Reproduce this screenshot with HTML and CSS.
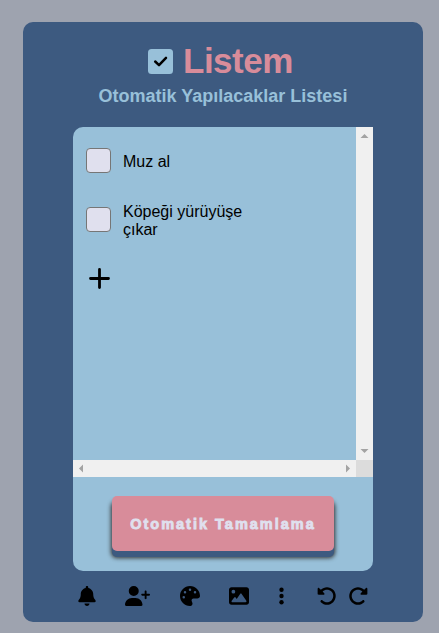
FILE: index.html
```html
<!DOCTYPE html>
<html lang="tr">
<head>
<meta charset="utf-8">
<title>Listem</title>
<link rel="stylesheet" href="styles.css">
</head>
<body>
<main class="card">
  <header class="header">
    <h1 class="title">
      <svg class="logo" viewBox="0 0 25 25"><rect width="25" height="25" rx="3.5" fill="#98c0d9"/><path d="M7.2 12.500 11 16.100 18 8.900" fill="none" stroke="#000" stroke-width="2.5" stroke-linecap="round" stroke-linejoin="round"/></svg>
      <span>Listem</span>
    </h1>
    <h2 class="subtitle">Otomatik Yapılacaklar Listesi</h2>
  </header>
  <section class="panel">
    <div class="scroller">
      <ul class="list">
        <li class="item"><span class="box"></span><span class="label">Muz al</span></li>
        <li class="item"><span class="box"></span><span class="label">Köpeği yürüyüşe çıkar</span></li>
        <li class="item"><svg class="plus" viewBox="0 0 21 21"><path d="M10.5 1.5v18M1.5 10.5h18" stroke="#000" stroke-width="2.8" stroke-linecap="round"/></svg></li>
      </ul>
      <div class="bar vertical">
        <svg viewBox="0 0 17 17"><path d="M4.500 11h8L8.500 7z"/></svg>
        <svg viewBox="0 0 17 17"><path d="M4.500 6h8L8.500 10z"/></svg>
      </div>
      <div class="bar horizontal">
        <svg viewBox="0 0 17 17"><path d="M10 4.500v8L6 8.500z"/></svg>
        <svg viewBox="0 0 17 17"><path d="M7 4.500v8l4-4z"/></svg>
      </div>
      <div class="corner"></div>
    </div>
    <div class="actions"><button class="complete">Otomatik Tamamlama</button></div>
  </section>
  <nav class="tools">
    <svg class="bell" viewBox="0 0 448 512"><path d="M224 0c-17.7 0-32 14.3-32 32V51.2C119 66 64 130.6 64 208v18.8c0 47-17.3 92.4-48.5 127.6l-7.400 8.300c-8.400 9.400-10.400 22.900-5.300 34.400S19.400 416 32 416H416c12.600 0 24-7.400 29.200-18.900s3.100-25-5.300-34.400l-7.400-8.300C401.300 319.200 384 273.900 384 226.800V208c0-77.400-55-142-128-156.800V32c0-17.700-14.300-32-32-32zm45.300 493.300c12-12 18.700-28.300 18.700-45.300H224 160c0 17 6.700 33.300 18.700 45.300s28.300 18.700 45.300 18.700s33.300-6.700 45.300-18.700z"/></svg>
    <svg class="person" viewBox="0 0 640 512"><path d="M96 128a128 128 0 1 1 256 0A128 128 0 1 1 96 128zM0 482.3C0 383.800 79.800 304 178.300 304h91.400C368.200 304 448 383.800 448 482.300c0 16.400-13.300 29.700-29.700 29.700H29.700C13.300 512 0 498.700 0 482.300zM504 312V248H440c-13.300 0-24-10.700-24-24s10.700-24 24-24h64V136c0-13.300 10.700-24 24-24s24 10.700 24 24v64h64c13.300 0 24 10.700 24 24s-10.700 24-24 24H552v64c0 13.300-10.700 24-24 24s-24-10.700-24-24z"/></svg>
    <svg class="palette" viewBox="0 0 512 512"><path d="M512 256c0 .9 0 1.8 0 2.700c-.4 36.500-33.600 61.300-70.100 61.300H344c-26.500 0-48 21.500-48 48c0 3.400 .4 6.700 1 9.900c2.100 10.200 6.500 20 10.800 29.900c6.100 13.800 12.100 27.500 12.100 42c0 31.800-21.600 60.700-53.400 62c-3.500 .1-7 .2-10.600 .2C114.600 512 0 397.400 0 256S114.600 0 256 0S512 114.600 512 256zM128 288a32 32 0 1 0 -64 0 32 32 0 1 0 64 0zm0-96a32 32 0 1 0 0-64 32 32 0 1 0 0 64zM288 96a32 32 0 1 0 -64 0 32 32 0 1 0 64 0zm96 96a32 32 0 1 0 0-64 32 32 0 1 0 0 64z"/></svg>
    <svg class="image" viewBox="0 0 512 512"><path d="M0 96C0 60.700 28.700 32 64 32H448c35.300 0 64 28.700 64 64V416c0 35.300-28.700 64-64 64H64c-35.300 0-64-28.700-64-64V96zM323.800 202.500c-4.500-6.600-11.900-10.500-19.800-10.500s-15.400 3.900-19.800 10.500l-87 127.600L170.700 297c-4.600-5.700-11.500-9-18.700-9s-14.200 3.300-18.700 9l-64 80c-5.800 7.200-6.900 17.100-2.900 25.400s12.400 13.600 21.600 13.600h96 32H424c8.900 0 17.100-4.900 21.200-12.800s3.600-17.400-1.400-24.700l-120-176zM112 192a48 48 0 1 0 0-96 48 48 0 1 0 0 96z"/></svg>
    <svg class="more" viewBox="0 0 128 512"><circle cx="64" cy="96" r="56"/><circle cx="64" cy="256" r="56"/><circle cx="64" cy="416" r="56"/></svg>
    <svg class="undo" viewBox="0 0 512 512"><path d="M48.500 224H40c-13.300 0-24-10.700-24-24V72c0-9.700 5.800-18.500 14.800-22.200s19.300-1.700 26.200 5.200L98.600 96.600c87.600-86.500 228.700-86.200 315.800 1c87.500 87.500 87.500 229.300 0 316.800s-229.300 87.500-316.800 0c-12.500-12.500-12.500-32.800 0-45.300s32.800-12.500 45.300 0c62.500 62.500 163.800 62.500 226.300 0s62.500-163.800 0-226.300c-62.200-62.200-162.700-62.500-225.300-1L185 183c6.900 6.900 8.900 17.200 5.200 26.200s-12.500 14.800-22.200 14.800H48.500z"/></svg>
    <svg class="redo" viewBox="0 0 512 512"><path transform="matrix(-1 0 0 1 512 0)" d="M48.500 224H40c-13.300 0-24-10.700-24-24V72c0-9.700 5.800-18.500 14.800-22.200s19.300-1.700 26.200 5.200L98.600 96.600c87.600-86.500 228.700-86.200 315.800 1c87.500 87.500 87.500 229.300 0 316.800s-229.300 87.500-316.800 0c-12.500-12.500-12.500-32.800 0-45.300s32.800-12.500 45.300 0c62.500 62.500 163.800 62.500 226.300 0s62.500-163.800 0-226.300c-62.200-62.200-162.700-62.500-225.300-1L185 183c6.900 6.900 8.900 17.200 5.200 26.200s-12.500 14.800-22.200 14.800H48.500z"/></svg>
  </nav>
</main>
</body>
</html>
```
FILE: styles.css
```css
* { box-sizing: border-box; }
body {
  margin: 0;
  padding: 22px 16px 11px 23px;
  background: #9ea3af;
  font-family: "Liberation Sans", Arial, sans-serif;
  color: #000;
}
svg { display: block; flex: none; }
.card {
  width: 400px;
  height: 600px;
  padding: 18px 50px 0;
  border-radius: 10px;
  background: #3d5a80;
}
.header { height: 87px; }
.title {
  display: flex;
  align-items: center;
  gap: 10px;
  height: 42px;
  margin: 0;
  padding-left: 75px;
  font-size: 35px;
  line-height: 42px;
  letter-spacing: -0.5px;
  color: #d88c9a;
}
.logo { width: 25px; height: 25px; }
.subtitle {
  margin: 3px 0 0;
  text-align: center;
  white-space: nowrap;
  font-size: 18px;
  line-height: 22px;
  color: #98c0d9;
}
.panel {
  height: 444px;
  border-radius: 10px;
  border-top-right-radius: 0;
  overflow: hidden;
  background: #98c0d9;
}
.scroller {
  display: grid;
  grid-template: 333px 17px / 283px 17px;
}
.list { margin: 0; padding: 4px 0 0 13px; list-style: none; }
.item { display: flex; align-items: center; height: 59px; }
.box {
  width: 25px;
  height: 25px;
  border: 1px solid #767676;
  border-radius: 4px;
  background: #e0e0ee;
}
.label { width: 140px; margin-left: 12px; padding-top: 2px; font-size: 16px; line-height: 18px; }
.plus { width: 21px; height: 21px; margin-left: 3px; }
.bar { display: flex; justify-content: space-between; background: #f0f0f0; }
.bar svg { width: 17px; height: 17px; fill: #a3a3a3; }
.vertical { flex-direction: column; }
.corner { background: #dcdcdc; }
.actions { display: flex; justify-content: center; padding-top: 19px; }
.complete {
  width: 222px;
  height: 55px;
  padding: 0;
  border: 0;
  border-radius: 5px;
  background: #d88c9a;
  box-shadow: 0 6px 0 #3d5a80, 0 6px 4px 1px #333;
  font-family: "Liberation Sans", Arial, sans-serif;
  font-size: 14.5px;
  font-weight: 700;
  letter-spacing: 2px;
  -webkit-text-stroke: 0.8px #e0e0ee;
  white-space: nowrap;
  color: #e0e0ee;
}
.tools { display: flex; align-items: center; height: 50px; padding-left: 5px; }
.tools svg { height: 20px; }
.bell { width: 18px; }
.person { width: 25px; margin-left: 29px; }
.palette { width: 20px; margin-left: 30px; }
.image { width: 20px; margin-left: 29px; }
.more { width: 5px; margin-left: 30px; }
.undo { width: 20px; margin-left: 33px; }
.redo { width: 20px; margin-left: 11px; }
```
